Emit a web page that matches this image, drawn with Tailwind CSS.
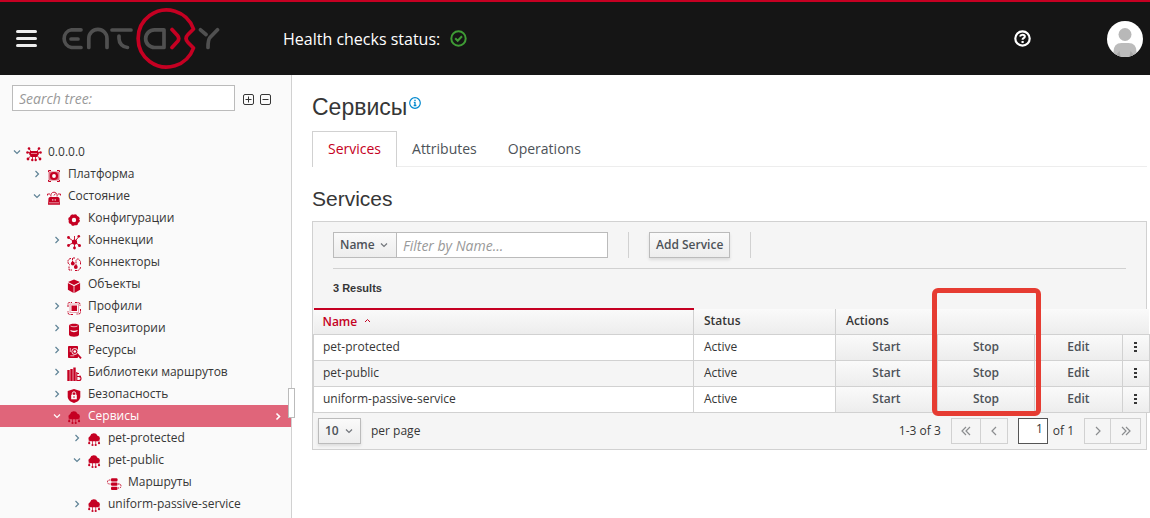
<!DOCTYPE html>
<html lang="ru">
<head>
<meta charset="utf-8">
<title>Entaxy</title>
<script src="https://cdn.jsdelivr.net/npm/@tailwindcss/browser@4"></script>
</head>
<body class="flex h-screen flex-col overflow-hidden bg-white font-['Open_Sans','Noto_Sans',sans-serif] text-xs text-[#363636]">

<svg class="hidden" aria-hidden="true">
  <symbol id="down" viewBox="0 0 10 10"><path d="M2 3.500l3 3 3-3" fill="none" stroke="currentColor" stroke-width="1.200"/></symbol>
  <symbol id="right" viewBox="0 0 10 10"><path d="M3.500 2l3 3-3 3" fill="none" stroke="currentColor" stroke-width="1.200"/></symbol>
  <symbol id="root" viewBox="0 0 16 16"><path d="M4 5h8l1 3-2 3H5L3 8z" fill="#c50022"/><path d="M3 2.500L5 5.500M13 2.500L11 5.500M1.500 6.500H4M14.500 6.500H12M4.500 10L2 13M11.500 10L14 13M6.500 10v3.500M9.500 10v3.500" fill="none" stroke="#c50022" stroke-width=".8"/><circle cx="3" cy="2.500" r="1.300" fill="#c50022"/><circle cx="13" cy="2.500" r="1.300" fill="#c50022"/><circle cx="1.500" cy="6.500" r="1.300" fill="#c50022"/><circle cx="14.500" cy="6.500" r="1.300" fill="#c50022"/><circle cx="2" cy="13" r="1.400" fill="#c50022"/><circle cx="14" cy="13" r="1.400" fill="#c50022"/><circle cx="6.300" cy="14" r="1.200" fill="#c50022"/><circle cx="9.700" cy="14" r="1.200" fill="#c50022"/><path d="M5 7.500h6" stroke="#f3b8c1" stroke-width=".7"/></symbol>
  <symbol id="platform" viewBox="0 0 16 16"><path d="M2.500 4V2.500H5M11 2.500h2.500V4M2.500 12v1.500H5M11 13.500h2.500V12" fill="none" stroke="#c50022"/><rect x="2.500" y="3.500" width="11" height="9" rx="1" fill="#c50022" opacity=".55"/><circle cx="8" cy="8" r="3" fill="#fff" stroke="#c50022" stroke-width="2.200"/></symbol>
  <symbol id="state" viewBox="0 0 16 16"><path d="M2 14.800L2.500 8.500Q2.700 7 4 7h8Q13.300 7 13.500 8.500L14 14.800z" fill="#c50022"/><path d="M3 12.800h10" stroke="#fafafa" stroke-width=".6"/><path d="M6.800 9v1.800M9.200 9v1.800" stroke="#fafafa" stroke-width=".8"/><path d="M5 6.500A3.200 3.200 0 1 1 11 6.500M8 5.500l1.500-2M1.500 5.500V4H4M14.500 5.500V4H12" fill="none" stroke="#c50022" stroke-width=".9"/></symbol>
  <symbol id="gear" viewBox="0 0 16 16"><circle cx="8" cy="8" r="3.800" fill="none" stroke="#c50022" stroke-width="3.200"/><circle cx="8" cy="8" r="5.200" fill="none" stroke="#c50022" stroke-width="1.200" stroke-dasharray="2.200 1.884"/></symbol>
  <symbol id="conn" viewBox="0 0 16 16"><path d="M8.500 8L3 4M8.500 8L12.500 3M8.500 8L3 11M8.500 8L13 11M8.500 8V14M8.500 8V2" stroke="#c50022" stroke-width=".9"/><circle cx="8.500" cy="8" r="2.600" fill="#c50022"/><circle cx="2.500" cy="3.500" r="1.400" fill="#c50022"/><circle cx="12.800" cy="2.300" r="1.300" fill="#c50022"/><circle cx="2.500" cy="11.500" r="1.400" fill="#c50022"/><circle cx="13.500" cy="11.500" r="1.500" fill="#c50022"/><circle cx="8.500" cy="14" r="1.400" fill="#c50022"/></symbol>
  <symbol id="connector" viewBox="0 0 16 16"><path d="M5 2.500A3 3 0 0 0 2 6q0 2 2 3M9 2H6.500v5M3 10.500V14h3M10 10V4.500L12 2.500l2.500 3V9M9 14.500h2A3.500 3.500 0 0 0 14.500 11" fill="none" stroke="#c50022" stroke-dasharray="2 .6"/><circle cx="6.800" cy="7.500" r="1.900" fill="#c50022"/><circle cx="9.800" cy="11" r="1.900" fill="#c50022"/></symbol>
  <symbol id="cube" viewBox="0 0 16 16"><path d="M8 1.500l6 2.500L8 7 2 4zM1.900 5L7.600 8v6.900l-5.700-3.200zM14.100 5L8.400 8v6.900l5.700-3.200z" fill="#c50022"/></symbol>
  <symbol id="profile" viewBox="0 0 16 16"><rect x="5.500" y="5.500" width="5.500" height="5.500" fill="#c50022"/><rect x="4" y="4" width="8.500" height="8.500" fill="none" stroke="#c50022" opacity=".35"/><path d="M2 7V4q0-1.500 1.500-1.500H6M9 2.500h3q2 0 2 2V6M14.500 9v3q0 2-2 2h-2M7 14.500H4q-2 0-2-2V11" fill="none" stroke="#c50022" stroke-dasharray="2.500 .8"/></symbol>
  <symbol id="db" viewBox="0 0 16 16"><path d="M3 3.500C3 1.300 13 1.300 13 3.500v9.300c0 2.500-10 2.500-10 0z" fill="#c50022"/><path d="M4.500 4c1.500 1 5.500 1 7 0" fill="none" stroke="#fafafa" stroke-width=".7"/><path d="M4.500 8c1.500 1 5.500 1 7 0v1c-1.500 1.500-5.500 1.500-7 0z" fill="#fafafa"/></symbol>
  <symbol id="res" viewBox="0 0 16 16"><path d="M2.500 2.500h9v11h-9z" fill="#c50022" stroke="#c50022" stroke-linejoin="round"/><path d="M4.300 4v4M4.300 11.800h4" stroke="#fafafa" stroke-width=".7"/><circle cx="8.800" cy="7.500" r="3" fill="#c50022" stroke="#fafafa" stroke-width=".9"/><circle cx="8.800" cy="7.500" r="1.300" fill="#fafafa"/><path d="M11.200 10.200l3.800 4.200" stroke="#c50022" stroke-width="1.800"/></symbol>
  <symbol id="lib" viewBox="0 0 16 16"><path d="M2.500 4v11M5.500 3v12M8.500 1.500V15" stroke="#c50022" stroke-width="2.400"/><path d="M10.800 6v9M11 7.500h2M11 10.500h2a1.500 1.500 0 0 1 0 4h-2" stroke="#c50022" fill="none" stroke-width="1.100"/><circle cx="14" cy="10.500" r="1" fill="#c50022"/></symbol>
  <symbol id="shield" viewBox="0 0 16 16"><path d="M8 1l6.300 2v5.500c0 3.500-3 5.500-6.300 6.500-3.300-1-6.300-3-6.300-6.500V3z" fill="#c50022"/><rect x="5.200" y="6.800" width="5.600" height="4.500" fill="#fafafa"/><path d="M6.300 7V5.500a1.700 1.700 0 0 1 3.400 0V7" fill="none" stroke="#fafafa" stroke-width=".9"/><path d="M8 8.200v1.700" stroke="#c50022"/></symbol>
  <symbol id="cloud" viewBox="0 0 16 16"><path d="M4.500 9.300A2.700 2.700 0 0 1 4 4.200 4 4 0 0 1 11.500 3.700 2.900 2.900 0 0 1 12 9.300z" fill="#c50022"/><path d="M3.200 8v3.200M6.500 9v3.500M9.700 9v3.500M13 8v3.200" stroke="#c50022" stroke-width=".7"/><circle cx="3.200" cy="11.200" r="1.100" fill="#c50022"/><circle cx="6.500" cy="13" r="1.100" fill="#c50022"/><circle cx="9.700" cy="13" r="1.100" fill="#c50022"/><circle cx="13" cy="11.200" r="1.100" fill="#c50022"/></symbol>
  <symbol id="route" viewBox="0 0 16 16"><rect x="5" y="2.200" width="6.500" height="3.300" rx="1" fill="#c50022"/><rect x="5" y="6.500" width="6.500" height="3.300" rx="1" fill="#c50022"/><rect x="5" y="10.800" width="6.500" height="3.300" rx="1" fill="#c50022"/><path d="M4.500 4H3.500Q1.500 4 1.500 6t2 2H4.500M12 8h1q2 0 2 2t-2 2h-1" fill="none" stroke="#c50022" stroke-dasharray="1.500 .7"/></symbol>
</svg>

<header class="flex h-[75px] shrink-0 items-center border-t-2 border-[#c50022] bg-[#151515] pr-[7px] pl-4 text-white">
  <button aria-label="Меню" class="flex w-[21px] flex-col gap-1"><span class="h-[3px] w-full rounded-xs bg-[#ededed]"></span><span class="h-[3px] w-full rounded-xs bg-[#ededed]"></span><span class="h-[3px] w-full rounded-xs bg-[#ededed]"></span></button>
  <a href="#" aria-label="Entaxy" class="ml-[23px]">
    <svg class="h-[62px] w-[160px]" viewBox="60 8 160 62" fill="none" stroke="#505050" stroke-width="3.700" stroke-linecap="round" stroke-linejoin="round">
      <path d="M81 29.800H71.500A9 9 0 0 0 71.500 47.500H81M71 39H78M88.800 47.500V38.500A9 9 0 0 1 107 38.500V47.500M112 30H131M119 36V38.500A9 9 0 0 0 127.500 47.500M164 29.800H154.500A8.800 8.800 0 0 0 154.500 47.500H164ZM200.500 29.800L206 34.500M217.500 29.800L210 37.500Q208 39.500 208 47.500"/>
      <path stroke="#c50022" d="M172 29.500L177.500 35.500Q180 38.500 177.500 41.500L172 47.500M193.500 29A28.500 28.500 0 1 0 193.500 48L188 42.500Q184 38.500 188 34.500Z"/>
    </svg>
  </a>
  <div class="ml-[63px] flex items-center gap-[10px] text-base">Health checks status:
    <svg class="size-[17px]" viewBox="0 0 17 17" fill="none" stroke="#3f9c35" stroke-width="2"><circle cx="8.500" cy="8.500" r="7.200"/><path d="M5.200 8.300l2.500 2.500 4.300-4.500"/></svg>
  </div>
  <button aria-label="Справка" class="ml-auto"><svg class="size-[17px]" viewBox="0 0 17 17" fill="none" stroke="#fff"><circle cx="8.500" cy="8.500" r="7.200" stroke-width="2.200"/><path d="M6 6.500q.5-1.800 2.600-1.800t2.200 1.700q0 1-1.200 1.700-1 .6-1 1.600" stroke-width="2.100"/><path d="M7.500 12h2.200" stroke-width="2.100"/></svg></button>
  <button aria-label="Профиль" class="ml-[76px]"><svg class="size-9" viewBox="0 0 36 36"><defs><clipPath id="av"><circle cx="18" cy="18" r="18"/></clipPath></defs><g clip-path="url(#av)"><path fill="#fff" d="M0 0h36v36H0z"/><circle cx="18" cy="13.500" r="6.500" fill="#b8b8b8"/><path d="M6.500 36v-5q0-9 8-9h7q8 0 8 9v5z" fill="#bcbcbc"/><path d="M12.500 30l1 6h-6zM23.500 30l-1 6h6z" fill="#a6a6a6"/></g></svg></button>
</header>

<div class="flex min-h-0 flex-1">
  <aside class="relative w-[292px] shrink-0 border-r border-[#d1d1d1] bg-[#fafafa]">
    <div class="flex items-center pt-[10px] pl-3">
      <input type="text" aria-label="Search tree" placeholder="Search tree:" class="h-[26px] w-[223px] border border-[#bbb] bg-white px-1.5 text-sm placeholder:text-[#999] placeholder:italic">
      <button aria-label="Expand all" class="mt-1 ml-2"><svg class="size-3" viewBox="0 0 12 12" fill="none" stroke="#363636"><rect x=".5" y=".5" width="10" height="10" rx="1.500"/><path d="M2.500 5.500h6M5.500 2.500v6"/></svg></button>
      <button aria-label="Collapse all" class="mt-1 ml-[5px]"><svg class="size-3" viewBox="0 0 12 12" fill="none" stroke="#363636"><rect x=".5" y=".5" width="10" height="10" rx="1.500"/><path d="M2.500 5.500h6"/></svg></button>
    </div>
    <ul role="tree" class="mt-[30px] [&_a]:ml-1.5 [&_button]:mr-1 [&_button]:size-[10px] [&_button]:text-[#5f8396] [&_button>svg]:size-[10px] [&_li]:flex [&_li]:h-[22px] [&_li]:items-center [&_li>svg]:mt-1 [&_li>svg]:size-4">
      <li role="treeitem" class="pl-3"><button aria-label="Свернуть"><svg><use href="#down"/></svg></button><svg><use href="#root"/></svg><a href="#">0.0.0.0</a></li>
      <li role="treeitem" class="pl-8"><button aria-label="Развернуть"><svg><use href="#right"/></svg></button><svg><use href="#platform"/></svg><a href="#">Платформа</a></li>
      <li role="treeitem" class="pl-8"><button aria-label="Свернуть"><svg><use href="#down"/></svg></button><svg><use href="#state"/></svg><a href="#">Состояние</a></li>
      <li role="treeitem" class="pl-[66px]"><svg><use href="#gear"/></svg><a href="#">Конфигурации</a></li>
      <li role="treeitem" class="pl-13"><button aria-label="Развернуть"><svg><use href="#right"/></svg></button><svg><use href="#conn"/></svg><a href="#">Коннекции</a></li>
      <li role="treeitem" class="pl-[66px]"><svg><use href="#connector"/></svg><a href="#">Коннекторы</a></li>
      <li role="treeitem" class="pl-[66px]"><svg><use href="#cube"/></svg><a href="#">Объекты</a></li>
      <li role="treeitem" class="pl-13"><button aria-label="Развернуть"><svg><use href="#right"/></svg></button><svg><use href="#profile"/></svg><a href="#">Профили</a></li>
      <li role="treeitem" class="pl-13"><button aria-label="Развернуть"><svg><use href="#right"/></svg></button><svg><use href="#db"/></svg><a href="#">Репозитории</a></li>
      <li role="treeitem" class="pl-13"><button aria-label="Развернуть"><svg><use href="#right"/></svg></button><svg><use href="#res"/></svg><a href="#">Ресурсы</a></li>
      <li role="treeitem" class="pl-13"><button aria-label="Развернуть"><svg><use href="#right"/></svg></button><svg><use href="#lib"/></svg><a href="#">Библиотеки маршрутов</a></li>
      <li role="treeitem" class="pl-13"><button aria-label="Развернуть"><svg><use href="#right"/></svg></button><svg><use href="#shield"/></svg><a href="#">Безопасность</a></li>
      <li role="treeitem" aria-selected="true" class="bg-[#e0657a] pr-2 pl-13 text-white"><button aria-label="Свернуть"><svg class="text-white"><use href="#down"/></svg></button><svg><use href="#cloud"/></svg><a href="#" class="flex-1">Сервисы</a><span class="size-[10px]"><svg viewBox="0 0 10 10" fill="none" stroke="#fff" stroke-width="1.600"><path d="M3.500 2.500l3 3-3 3"/></svg></span></li>
      <li role="treeitem" class="pl-18"><button aria-label="Развернуть"><svg><use href="#right"/></svg></button><svg><use href="#cloud"/></svg><a href="#">pet-protected</a></li>
      <li role="treeitem" class="pl-18"><button aria-label="Свернуть"><svg><use href="#down"/></svg></button><svg><use href="#cloud"/></svg><a href="#">pet-public</a></li>
      <li role="treeitem" class="pl-[106px]"><svg><use href="#route"/></svg><a href="#">Маршруты</a></li>
      <li role="treeitem" class="pl-18"><button aria-label="Развернуть"><svg><use href="#right"/></svg></button><svg><use href="#cloud"/></svg><a href="#">uniform-passive-service</a></li>
    </ul>
    <div class="absolute top-[313px] -right-1 h-[30px] w-[7px] border border-[#bbb] bg-white"></div>
  </aside>

  <main class="min-w-0 flex-1 pr-[3px] pl-5">
    <h1 class="mt-4 flex h-8 items-center font-['Liberation_Sans',sans-serif] text-[23px]">Сервисы<button aria-label="Информация" class="mb-2 ml-0.5"><svg class="size-3" viewBox="0 0 12 12" fill="none" stroke="#0088ce"><circle cx="6" cy="6" r="5.300" stroke-width="1.200"/><path d="M4.800 5.300H6v3M4.700 8.500h2.700M5.300 3.300h1.400" stroke-width="1.300"/></svg></button></h1>
    <nav class="mt-2 flex h-9 border-b border-[#ededed] text-sm text-[#4d5258]">
      <a href="#" class="h-9 border border-b-0 border-[#d1d1d1] bg-white px-[15px] pt-[7px] text-[#c50022]">Services</a>
      <a href="#" class="px-[15px] pt-2">Attributes</a>
      <a href="#" class="px-4 pt-2">Operations</a>
    </nav>
    <h2 class="mt-[18px] flex h-7 items-center font-['Liberation_Sans',sans-serif] text-[21px]">Services</h2>

    <section class="relative mt-2 border border-[#d1d1d1] bg-[#f5f5f5]">
      <form class="mx-5 flex items-center border-b border-[#d1d1d1] py-[10px]">
        <label class="relative"><select aria-label="Filter field" class="block h-[26px] w-16 appearance-none border border-[#bbb] bg-linear-to-b from-[#fafafa] to-[#ededed] pl-1.5 font-semibold text-[#4d5258]"><option>Name</option></select><svg class="pointer-events-none absolute top-2 right-2 size-[10px] text-[#72767b]"><use href="#down"/></svg></label>
        <input type="text" aria-label="Filter by Name" placeholder="Filter by Name..." class="-ml-px h-[26px] w-[212px] border border-[#bbb] bg-white px-1.5 text-sm placeholder:text-[#999] placeholder:italic">
        <span class="ml-5 h-[26px] w-px bg-[#d1d1d1]"></span>
        <button type="button" class="ml-5 h-[26px] border border-[#bbb] bg-linear-to-b from-[#fafafa] to-[#ededed] px-1.5 font-semibold text-[#4d5258] shadow-[0_2px_3px_rgba(3,3,3,0.1)]">Add Service</button>
        <span class="ml-5 h-[26px] w-px bg-[#d1d1d1]"></span>
      </form>
      <h5 class="mx-5 flex h-[39px] items-center font-['Liberation_Sans',sans-serif] text-[11px] font-bold">3 Results</h5>
      <table class="w-[calc(100%+4px)] table-fixed border-collapse text-left [&_tbody_td]:h-[26px] [&_tbody_td]:border [&_tbody_td]:border-[#d1d1d1] [&_td:nth-child(1)]:px-[9px] [&_td:nth-child(2)]:px-[10px] [&_td>button]:block [&_td>button]:h-[25px] [&_td>button]:w-full [&_td>button]:bg-linear-to-b [&_td>button]:from-[#fafafa] [&_td>button]:to-[#ededed] [&_td>button]:font-semibold [&_td>button]:text-[#4d5258]">
        <colgroup><col><col class="w-[142px]"><col class="w-[102px]"><col class="w-[97px]"><col class="w-[88px]"><col class="w-[27px]"></colgroup>
        <thead><tr class="h-[25px] bg-linear-to-b from-[#fafafa] to-[#ededed] [&_th]:font-semibold">
          <th class="border-t-2 border-r border-t-[#c50022] border-r-[#d1d1d1] px-[9px] text-[#c50022]">Name <svg class="mb-1 ml-1 inline size-[7px]" viewBox="0 0 7 7" fill="none" stroke="#c50022"><path d="M1 5l2.500-2.500L6 5"/></svg></th>
          <th class="border-r border-[#d1d1d1] px-[10px]">Status</th><th colspan="4" class="px-[10px]">Actions</th></tr></thead>
        <tbody>
          <tr class="bg-white"><td>pet-protected</td><td>Active</td><td><button>Start</button></td><td><button>Stop</button></td><td><button>Edit</button></td><td><button aria-label="More"><svg class="mx-auto h-[10px] w-[3px]" viewBox="0 0 3 10" fill="#363636"><path d="M0 0h3v2H0zM0 4h3v2H0zM0 8h3v2H0z"/></svg></button></td></tr>
          <tr class="bg-[#f5f5f5]"><td>pet-public</td><td>Active</td><td><button>Start</button></td><td><button>Stop</button></td><td><button>Edit</button></td><td><button aria-label="More"><svg class="mx-auto h-[10px] w-[3px]" viewBox="0 0 3 10" fill="#363636"><path d="M0 0h3v2H0zM0 4h3v2H0zM0 8h3v2H0z"/></svg></button></td></tr>
          <tr class="bg-white"><td>uniform-passive-service</td><td>Active</td><td><button>Start</button></td><td><button>Stop</button></td><td><button>Edit</button></td><td><button aria-label="More"><svg class="mx-auto h-[10px] w-[3px]" viewBox="0 0 3 10" fill="#363636"><path d="M0 0h3v2H0zM0 4h3v2H0zM0 8h3v2H0z"/></svg></button></td></tr>
        </tbody>
      </table>
      <div class="flex h-9 items-center px-[5px]">
        <label class="relative"><select aria-label="Rows per page" class="block h-[26px] w-[43px] appearance-none border border-[#bbb] bg-linear-to-b from-[#fafafa] to-[#ededed] pl-1.5 font-semibold text-[#4d5258] shadow-[0_2px_3px_rgba(3,3,3,0.1)]"><option>10</option></select><svg class="pointer-events-none absolute top-2 right-[7px] size-[10px] text-[#72767b]"><use href="#down"/></svg></label>
        <span class="ml-[10px]">per page</span>
        <span class="mr-[10px] ml-auto">1-3 of 3</span>
        <div class="flex h-[26px] border border-[#d1d1d1] text-[#8b8d8f]">
          <button aria-label="First page" class="flex w-[29px] items-center justify-center border-r border-[#d1d1d1]"><svg class="size-[10px]" viewBox="0 0 10 10" fill="none" stroke="currentColor" stroke-width="1.200"><path d="M5 1L1 5l4 4M9 1L5 5l4 4"/></svg></button>
          <button aria-label="Previous page" class="flex w-[26px] items-center justify-center"><svg class="size-[10px]" viewBox="0 0 10 10" fill="none" stroke="currentColor" stroke-width="1.200"><path d="M7 1L3 5l4 4"/></svg></button>
        </div>
        <input type="text" aria-label="Page" value="1" class="ml-[10px] h-[26px] w-[30px] border border-[#555] bg-white pr-1 pb-1 text-right">
        <span class="mr-[10px] ml-[5px]">of 1</span>
        <div class="flex h-[26px] border border-[#d1d1d1] text-[#8b8d8f]">
          <button aria-label="Next page" class="flex w-[26px] items-center justify-center border-r border-[#d1d1d1]"><svg class="size-[10px]" viewBox="0 0 10 10" fill="none" stroke="currentColor" stroke-width="1.200"><path d="M3 1l4 4-4 4"/></svg></button>
          <button aria-label="Last page" class="flex w-[29px] items-center justify-center"><svg class="size-[10px]" viewBox="0 0 10 10" fill="none" stroke="currentColor" stroke-width="1.200"><path d="M1 1l4 4-4 4M5 1l4 4-4 4"/></svg></button>
        </div>
      </div>
      <div class="pointer-events-none absolute top-[66px] right-[105px] h-[128px] w-[109px] rounded-md border-5 border-[#e63c32]"></div>
    </section>
  </main>
</div>
</body>
</html>
